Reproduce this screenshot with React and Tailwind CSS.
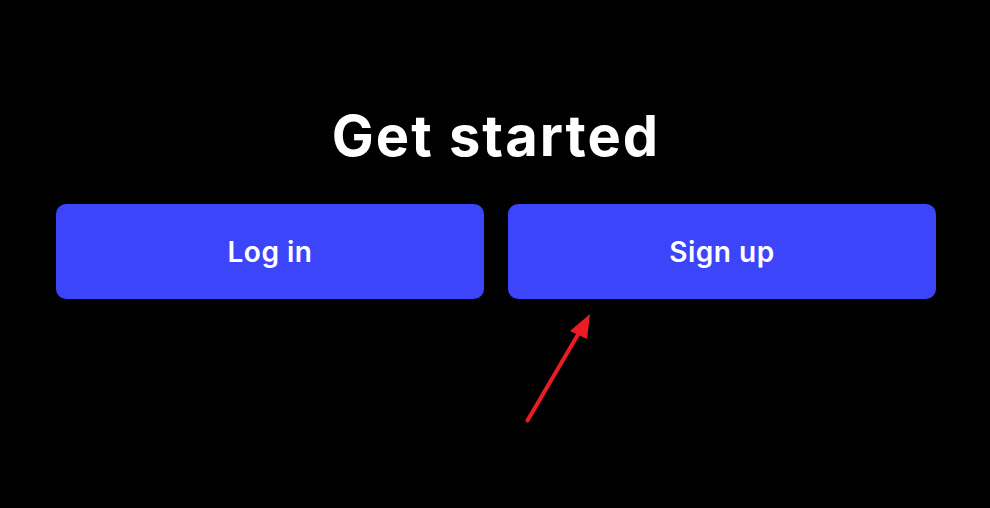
import React from 'react';

const Arrow = () => (
    <svg className="absolute left-[520px] top-[308px]" width="80" height="120" viewBox="0 0 80 120" fill="none">
        <line x1="7.5" y1="112.5" x2="63" y2="18" stroke="#ec1c24" strokeWidth="4" strokeLinecap="round" />
        <polygon points="70,6 50,23 67,31" fill="#ec1c24" />
    </svg>
);

const App = () => {
    return (
        <div className="relative w-[990px] h-[508px] bg-black font-['Inter','Liberation_Sans',sans-serif] text-white overflow-hidden">
            <div className="flex flex-col items-center pt-[98px] pl-[56px] pr-[54px]">
                <h1 className="text-[56px] leading-[76px] font-bold tracking-[2px]">Get started</h1>
                <div className="grid grid-cols-2 gap-6 w-full mt-[30px]">
                    <button className="h-[95px] rounded-[10px] bg-[#3d45fa] text-[28px] font-semibold tracking-[0.5px]">Log in</button>
                    <button className="h-[95px] rounded-[10px] bg-[#3d45fa] text-[28px] font-semibold tracking-[0.5px]">Sign up</button>
                </div>
            </div>
            <Arrow />
        </div>
    );
};

export default App;
